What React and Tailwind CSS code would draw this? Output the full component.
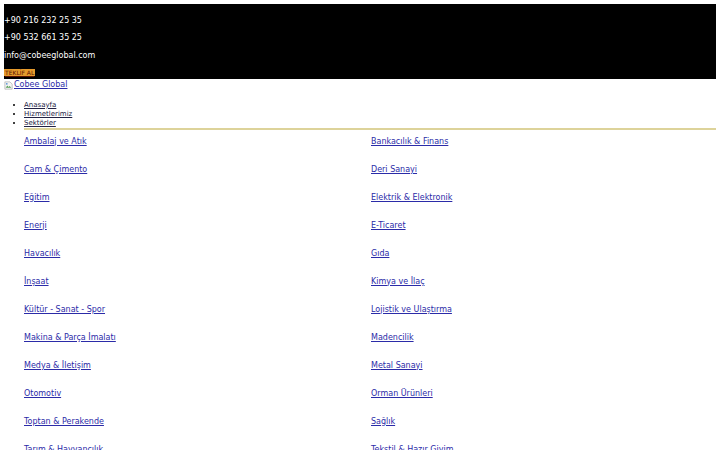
import React from "react";

const sectors = [
  "Ambalaj ve Atık",
  "Bankacılık & Finans",
  "Cam & Çimento",
  "Deri Sanayi",
  "Eğitim",
  "Elektrik & Elektronik",
  "Enerji",
  "E-Ticaret",
  "Havacılık",
  "Gıda",
  "İnşaat",
  "Kimya ve İlaç",
  "Kültür - Sanat - Spor",
  "Lojistik ve Ulaştırma",
  "Makina & Parça İmalatı",
  "Madencilik",
  "Medya & İletişim",
  "Metal Sanayi",
  "Otomotiv",
  "Orman Ürünleri",
  "Toptan & Perakende",
  "Sağlık",
  "Tarım & Hayvancılık",
  "Tekstil & Hazır Giyim",
];

function BrokenImage() {
  return (
    <svg width="9" height="9" viewBox="0 0 16 16" className="shrink-0">
      <path d="M1.5 1.5h9l4 4v9h-13z" fill="#f4f4f4" stroke="#9a9a9a" strokeWidth="1" />
      <path d="M3 12l3-4 2 2.5 2-1.5 3 3z" fill="#5aa05a" />
      <circle cx="5" cy="5" r="1.5" fill="#4f8fd6" />
    </svg>
  );
}

export default function App() {
  return (
    <div className="min-h-[450px] bg-white p-[4px] font-['DejaVu_Sans',sans-serif] overflow-hidden">
      <div className="bg-black text-white text-[8px] leading-[9.5px] pt-[12px] pb-[3px] flex flex-col">
        <p>+90 216 232 25 35</p>
        <p className="mt-[7.5px]">+90 532 661 35 25</p>
        <p className="mt-[8px]">info@cobeeglobal.com</p>
        <div className="mt-[9px] flex">
          <a href="#" className="block bg-[#e59a2c] text-[#5a1400] text-[6px] leading-[7px] px-[1px] underline">
            TEKLİF AL
          </a>
        </div>
      </div>

      <a href="#" className="flex items-center gap-[1px] mt-[1px] h-[10px] text-[8px] leading-[10px] text-[#2b2ba8] underline w-fit">
        <BrokenImage />
        <span>Cobee Global</span>
      </a>

      <ul className="list-disc ml-[20px] mt-[10.5px] text-[7px] leading-[9px] border-b-2 border-[#ddd39a]">
        <li><a href="#" className="text-[#222244] underline">Anasayfa</a></li>
        <li><a href="#" className="text-[#222244] underline">Hizmetlerimiz</a></li>
        <li><a href="#" className="text-[#222244] underline">Sektörler</a></li>
      </ul>

      <ul className="grid grid-cols-2 ml-[20px] gap-y-[4px] text-[8px] leading-[24px]">
        {sectors.map((s, i) => (
          <li key={s} className={i % 2 ? "pl-[1px]" : ""}>
            <a href="#" className="text-[#2b2ba8] underline">{s}</a>
          </li>
        ))}
      </ul>
    </div>
  );
}
